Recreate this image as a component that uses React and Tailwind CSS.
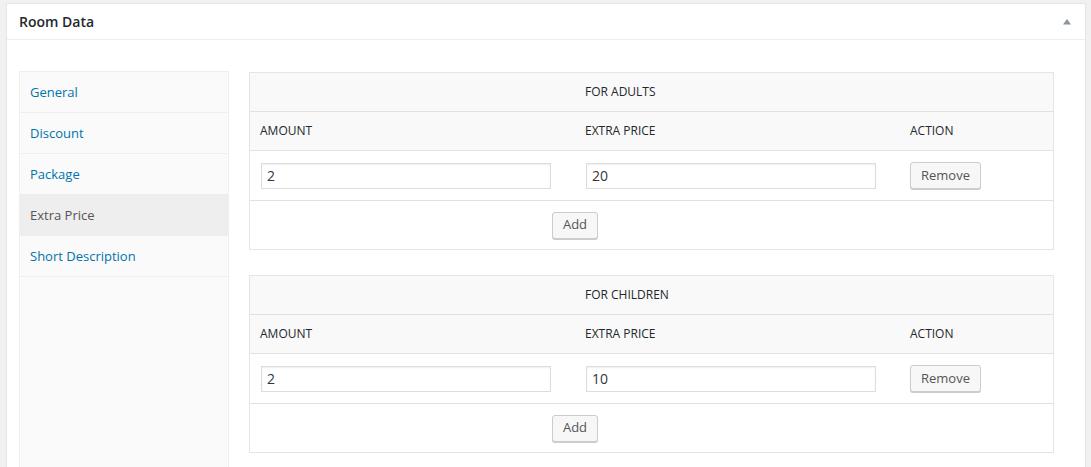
import React from "react";

const tabs = [
  { label: "General" },
  { label: "Discount" },
  { label: "Package" },
  { label: "Extra Price", active: true },
  { label: "Short Description" },
];

const PriceTable = ({ title, amount, price }) => {
  return (
    <div className="w-[805px] border border-[#e5e5e5] bg-white">
      <div className="flex h-[39px] items-center border-b border-[#e1e1e1] bg-[#f9f9f9] text-[12px] text-[#23282d]">
        <div className="w-[325px]" />
        <div className="w-[325px] pl-[10px]">{title}</div>
      </div>
      <div className="flex h-[39px] items-center border-b border-[#e1e1e1] bg-[#f9f9f9] text-[12px] text-[#23282d]">
        <div className="w-[325px] pl-[10px]">AMOUNT</div>
        <div className="w-[325px] pl-[10px]">EXTRA PRICE</div>
        <div className="pl-[10px]">ACTION</div>
      </div>
      <div className="flex h-[50px] items-center border-b border-[#e1e1e1]">
        <div className="w-[325px] pl-[11px]">
          <input
            readOnly
            value={amount}
            className="h-[26px] w-[290px] border border-[#ddd] px-[5px] text-[14px] text-[#32373c] shadow-[inset_0_1px_2px_rgba(0,0,0,0.07)] outline-none"
          />
        </div>
        <div className="w-[325px] pl-[11px]">
          <input
            readOnly
            value={price}
            className="h-[26px] w-[290px] border border-[#ddd] px-[5px] text-[14px] text-[#32373c] shadow-[inset_0_1px_2px_rgba(0,0,0,0.07)] outline-none"
          />
        </div>
        <div className="pl-[10px]">
          <button className="h-[27px] rounded-[3px] border border-[#ccc] bg-[#f7f7f7] px-[10px] text-[13px] text-[#555] shadow-[0_1px_0_#ccc]">
            Remove
          </button>
        </div>
      </div>
      <div className="flex h-[48px] items-center">
        <div className="flex w-[650px] justify-center">
          <button className="h-[27px] rounded-[3px] border border-[#ccc] bg-[#f7f7f7] px-[10px] text-[13px] text-[#555] shadow-[0_1px_0_#ccc]">
            Add
          </button>
        </div>
      </div>
    </div>
  );
};

const App = () => {
  return (
    <div className="h-[467px] overflow-hidden bg-[#f1f1f1] pl-[6px] pr-[5px] pt-[3px] font-['Open_Sans',sans-serif]">
      <div className="h-[600px] border border-[#e5e5e5] bg-white shadow-[0_1px_1px_rgba(0,0,0,0.04)]">
        <div className="flex h-[36px] items-center justify-between border-b border-[#eee] pl-[12px] pr-[12px]">
          <h2 className="text-[14px] font-semibold text-[#23282d]">Room Data</h2>
          <svg width="10" height="6" viewBox="0 0 10 6" className="mr-[1px]">
            <path d="M5 0 L9 5.5 L1 5.5 Z" fill="#8a96a2" />
          </svg>
        </div>
        <div className="flex gap-[20px] pl-[12px] pt-[31px]">
          <div className="h-[500px] w-[210px] border border-[#eee] bg-[#fafafa]">
            {tabs.map((tab) => (
              <div
                key={tab.label}
                className={
                  tab.active
                    ? "flex h-[41px] items-center border-b border-[#eee] bg-[#eee] pl-[10px] pt-[2px] text-[13px] text-[#555]"
                    : "flex h-[41px] items-center border-b border-[#eee] pl-[10px] pt-[2px] text-[13px] text-[#0073aa]"
                }
              >
                {tab.label}
              </div>
            ))}
          </div>
          <div className="flex flex-col gap-[25px] pt-[1px]">
            <PriceTable title="FOR ADULTS" amount="2" price="20" />
            <PriceTable title="FOR CHILDREN" amount="2" price="10" />
          </div>
        </div>
      </div>
    </div>
  );
};

export default App;
